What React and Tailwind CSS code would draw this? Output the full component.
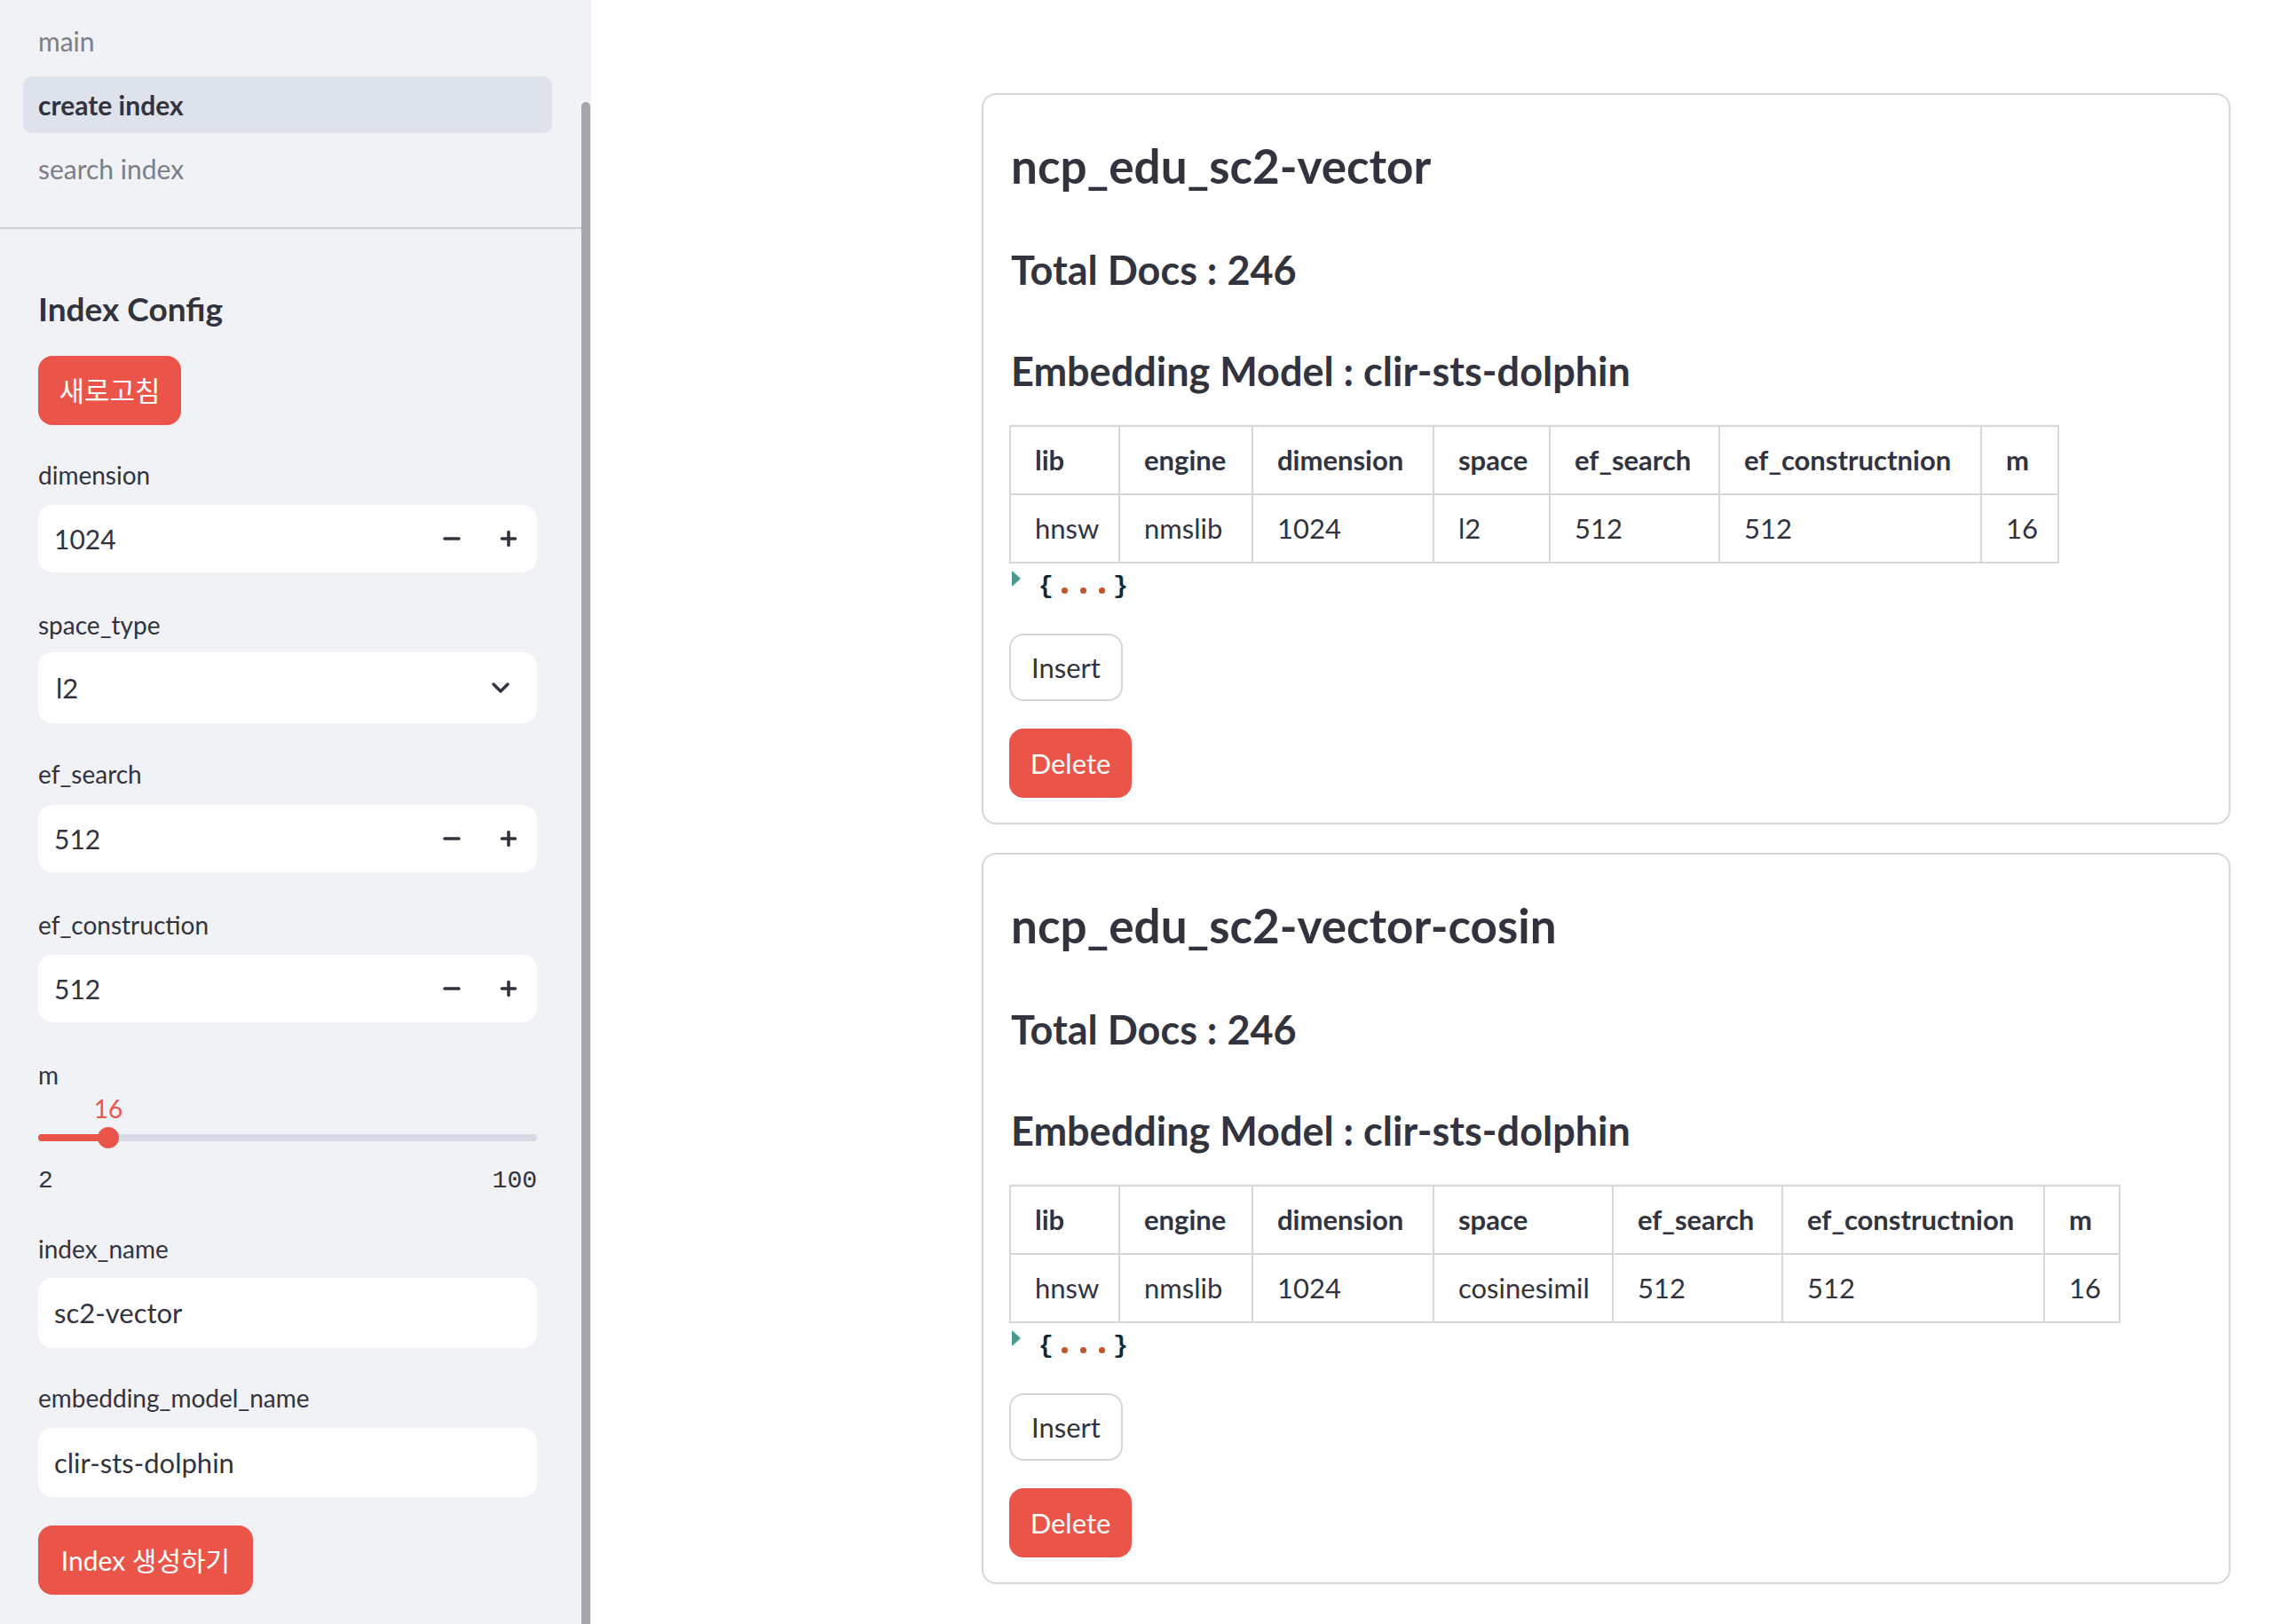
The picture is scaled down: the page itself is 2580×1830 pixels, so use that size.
import React from 'react';

const RED = 'bg-[#eb5549]';

const table1 = [
  { head: 'lib', val: 'hnsw', w: 'w-[123px]' },
  { head: 'engine', val: 'nmslib', w: 'w-[150px]' },
  { head: 'dimension', val: '1024', w: 'w-[204px]' },
  { head: 'space', val: 'l2', w: 'w-[131px]' },
  { head: 'ef_search', val: '512', w: 'w-[191px]' },
  { head: 'ef_constructnion', val: '512', w: 'w-[295px]' },
  { head: 'm', val: '16', w: 'w-[87px]' },
];

const table2 = [
  { head: 'lib', val: 'hnsw', w: 'w-[123px]' },
  { head: 'engine', val: 'nmslib', w: 'w-[150px]' },
  { head: 'dimension', val: '1024', w: 'w-[204px]' },
  { head: 'space', val: 'cosinesimil', w: 'w-[202px]' },
  { head: 'ef_search', val: '512', w: 'w-[191px]' },
  { head: 'ef_constructnion', val: '512', w: 'w-[295px]' },
  { head: 'm', val: '16', w: 'w-[85px]' },
];

const indexes = [
  { name: 'ncp_edu_sc2-vector', cols: table1, tableW: 'w-[1183px]' },
  { name: 'ncp_edu_sc2-vector-cosin', cols: table2, tableW: 'w-[1252px]' },
];

const Label = ({ children, mt }) => (
  <div className={`h-[36px] flex items-center text-[28px] leading-none ${mt}`}>{children}</div>
);

const Minus = () => (
  <svg width="20" height="20" viewBox="0 0 20 20">
    <path d="M2 10h16" stroke="#31333f" strokeWidth="3.6" strokeLinecap="round" />
  </svg>
);

const Plus = () => (
  <svg width="20" height="20" viewBox="0 0 20 20">
    <path d="M2.5 10h15M10 2.5v15" stroke="#31333f" strokeWidth="3.6" strokeLinecap="round" />
  </svg>
);

const NumberInput = ({ value, mt }) => (
  <div className={`h-[76px] w-[562px] bg-white rounded-[16px] flex items-center ${mt}`}>
    <span className="flex-1 pl-[18px] text-[30px] leading-none">{value}</span>
    <span className="w-[64px] h-full flex items-center justify-center"><Minus /></span>
    <span className="w-[64px] h-full flex items-center justify-center"><Plus /></span>
  </div>
);

const TextInput = ({ value, mt, h }) => (
  <div className={`w-[562px] bg-white rounded-[16px] flex items-center pl-[18px] text-[31px] leading-none ${h} ${mt}`}>
    {value}
  </div>
);

const Sidebar = () => (
  <aside className="relative w-[666px] h-full shrink-0 bg-[#f0f2f6]">
    <div className="absolute right-[1px] top-[115px] bottom-0 w-[10px] rounded-t-full bg-[#a4a5aa]" />

    <nav className="pt-[14px] pl-[26px] w-[622px] flex flex-col gap-[8px] text-[30px] leading-none">
      <div className="h-[64px] flex items-center pl-[17px] text-[#7d7f88]">main</div>
      <div className="h-[64px] flex items-center pl-[17px] rounded-[10px] bg-[#dee2ea] font-bold">create index</div>
      <div className="h-[64px] flex items-center pl-[17px] text-[#7d7f88]">search index</div>
    </nav>

    <div className="mt-[34px] h-[2px] w-[655px] bg-[#cdd0d6]" />

    <div className="pl-[43px] flex flex-col">
      <h2 className="mt-[65px] h-[48px] flex items-center text-[37px] font-bold leading-none">Index Config</h2>
      <button className={`mt-[30px] h-[78px] w-[161px] rounded-[16px] ${RED} text-white text-[31px] leading-none flex items-center justify-center`}>
        새로고침
      </button>

      <Label mt="mt-[38px]">dimension</Label>
      <NumberInput value="1024" mt="mt-[16px]" />

      <Label mt="mt-[41px]">space_type</Label>
      <div className="mt-[13px] h-[80px] w-[562px] bg-white rounded-[16px] flex items-center justify-between pl-[20px] pr-[30px] text-[31px] leading-none">
        <span>l2</span>
        <svg width="22" height="14" viewBox="0 0 22 14">
          <path d="M3 3l8 8 8-8" fill="none" stroke="#31333f" strokeWidth="3.4" strokeLinecap="round" strokeLinejoin="round" />
        </svg>
      </div>

      <Label mt="mt-[39px]">ef_search</Label>
      <NumberInput value="512" mt="mt-[17px]" />

      <Label mt="mt-[41px]">ef_construction</Label>
      <NumberInput value="512" mt="mt-[16px]" />

      <Label mt="mt-[41px]">m</Label>
      <div className="w-[562px]">
        <div className="mt-[2px] h-[36px] relative">
          <span className="absolute left-[79px] -translate-x-1/2 top-0 h-[36px] flex items-center text-[28px] leading-none text-[#eb5549]">16</span>
        </div>
        <div className="mt-[3px] h-[24px] relative flex items-center">
          <div className="w-full h-[8px] rounded-full bg-[#d5dae4]" />
          <div className="absolute left-0 top-[8px] h-[8px] w-[80px] rounded-l-full bg-[#eb5549]" />
          <div className="absolute left-[67px] top-0 w-[24px] h-[24px] rounded-full bg-[#eb5549]" />
        </div>
        <div className="mt-[19px] h-[36px] flex items-center justify-between font-['Liberation_Mono',monospace] text-[28px] leading-none">
          <span>2</span>
          <span>100</span>
        </div>
      </div>

      <Label mt="mt-[40px]">index_name</Label>
      <TextInput value="sc2-vector" mt="mt-[15px]" h="h-[79px]" />

      <Label mt="mt-[38px]">embedding_model_name</Label>
      <TextInput value="clir-sts-dolphin" mt="mt-[16px]" h="h-[78px]" />

      <button className={`mt-[32px] h-[78px] w-[242px] rounded-[16px] ${RED} text-white text-[30px] leading-none flex items-center justify-center`}>
        Index 생성하기
      </button>
    </div>
  </aside>
);

const IndexCard = ({ index }) => (
  <section className="border-2 border-[#d6d7da] rounded-[16px] pt-[32px] pb-[28px] pl-[29px] flex flex-col items-start">
    <h2 className="h-[94px] flex items-center pl-[2px] text-[53px] font-bold leading-none">{index.name}</h2>
    <h3 className="mt-[39px] h-[64px] flex items-center pl-[2px] text-[45px] font-bold leading-none">Total Docs : 246</h3>
    <h3 className="mt-[50px] h-[64px] flex items-center pl-[2px] text-[45px] font-bold leading-none">Embedding Model : clir-sts-dolphin</h3>

    <table className={`mt-[29px] table-fixed border-collapse text-[31px] leading-none ${index.tableW}`}>
      <thead>
        <tr className="h-[77px]">
          {index.cols.map(c => (
            <th key={c.head} className={`${c.w} border-2 border-[#d6d7da] pl-[27px] text-left font-bold whitespace-nowrap`}>
              {c.head}
            </th>
          ))}
        </tr>
      </thead>
      <tbody>
        <tr className="h-[77px]">
          {index.cols.map(c => (
            <td key={c.head} className="border-2 border-[#d6d7da] pl-[27px] text-left whitespace-nowrap">
              {c.val}
            </td>
          ))}
        </tr>
      </tbody>
    </table>

    <div className="mt-[5px] h-[40px] flex items-start pl-[3px]">
      <svg className="mt-[3px]" width="11" height="18" viewBox="0 0 11 18">
        <path d="M0 0L10 9L0 18Z" fill="#4a9a92" />
      </svg>
      <div className="ml-[17px] mt-[5px] h-[32px] flex items-center font-['Liberation_Mono',monospace] text-[28px] font-bold leading-none text-[#0f2b36]">
        <span className="w-[21px] text-center">{'{'}</span>
        <span className="w-[21px] flex justify-center pt-[8px]"><span className="w-[7px] h-[7px] rounded-full bg-[#c0552b]" /></span>
        <span className="w-[21px] flex justify-center pt-[8px]"><span className="w-[7px] h-[7px] rounded-full bg-[#c0552b]" /></span>
        <span className="w-[21px] flex justify-center pt-[8px]"><span className="w-[7px] h-[7px] rounded-full bg-[#c0552b]" /></span>
        <span className="w-[21px] text-center">{'}'}</span>
      </div>
    </div>

    <button className="mt-[34px] h-[76px] w-[128px] rounded-[16px] border-2 border-[#d6d7da] bg-white text-[31px] leading-none flex items-center justify-center">
      Insert
    </button>
    <button className={`mt-[31px] h-[78px] w-[138px] rounded-[16px] ${RED} text-white text-[31px] leading-none flex items-center justify-center`}>
      Delete
    </button>
  </section>
);

const App = () => {
  return (
    <div className="flex w-[2580px] h-[1830px] overflow-hidden bg-white text-[#31333f] font-[Lato,'Noto_Sans_CJK_KR',sans-serif]">
      <Sidebar />
      <main className="flex-1 pl-[440px] pr-[67px] pt-[105px] flex flex-col gap-[32px]">
        {indexes.map(index => (
          <IndexCard key={index.name} index={index} />
        ))}
      </main>
    </div>
  );
};

export default App;
